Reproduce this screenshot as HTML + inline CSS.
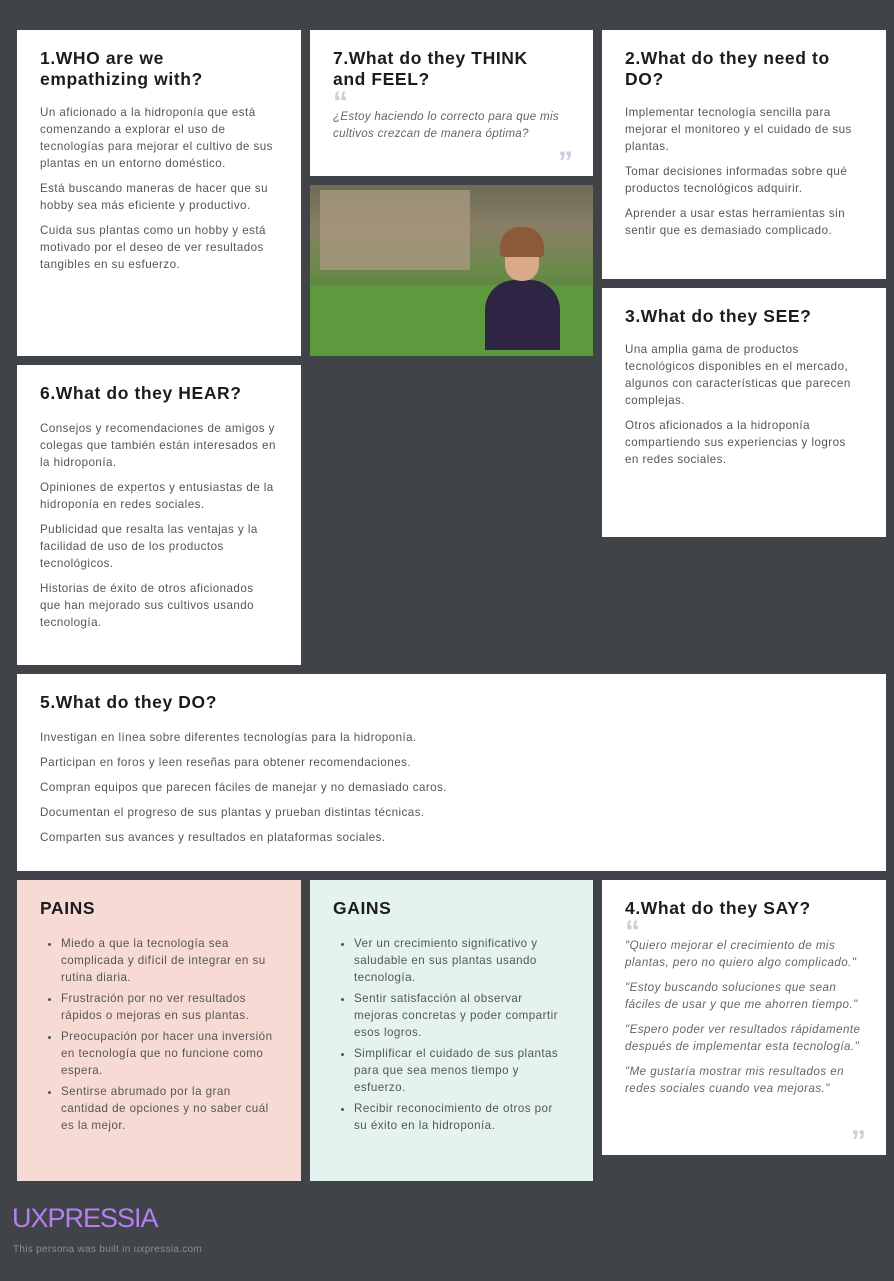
<!DOCTYPE html><html><head><meta charset="utf-8"><style>
body{margin:0;width:894px;height:1281px;background:#404449;font-family:"Liberation Sans",sans-serif;position:relative;overflow:hidden}
.c{position:absolute;background:#fff;box-sizing:border-box;padding:18px 24px 0 23px}
h2{margin:0 0 14px;font-size:17.5px;line-height:21px;font-weight:bold;color:#1c1c1c;letter-spacing:.6px;max-width:225px}
p{margin:0 0 8px;font-size:11.6px;line-height:17px;color:#555;letter-spacing:.45px}
.i{font-style:italic;color:#666;letter-spacing:.45px}
ul{margin:0;padding-left:21px}
li{font-size:11.6px;line-height:17px;color:#555;margin-bottom:4px;letter-spacing:.45px}
.q{font-size:30px;color:#ccd;font-family:"Liberation Sans",sans-serif;line-height:18px;height:14px;font-weight:bold}
.qr{position:absolute;right:20px;bottom:-4px;font-size:30px;color:#ccd;font-family:"Liberation Sans",sans-serif;font-weight:bold}
</style></head><body>
<div class="c" style="left:17px;top:30px;width:284px;height:326px"><h2>1.WHO are we empathizing with?</h2>
<p>Un aficionado a la hidroponía que está comenzando a explorar el uso de tecnologías para mejorar el cultivo de sus plantas en un entorno doméstico.</p>
<p>Está buscando maneras de hacer que su hobby sea más eficiente y productivo.</p>
<p>Cuida sus plantas como un hobby y está motivado por el deseo de ver resultados tangibles en su esfuerzo.</p></div>
<div class="c" style="left:310px;top:30px;width:283px;height:146px"><h2 style="margin-bottom:4px">7.What do they THINK and FEEL?</h2><div class="q">“</div>
<p class="i" style="letter-spacing:.3px">¿Estoy haciendo lo correcto para que mis cultivos crezcan de manera óptima?</p><div class="qr">”</div></div>
<div style="position:absolute;left:310px;top:185px;width:283px;height:171px;overflow:hidden;background:linear-gradient(180deg,#6d6a55 0%,#8a7f66 25%,#6a8a4a 50%,#4f7f35 75%,#5e8a3c 100%)">
<div style="position:absolute;left:10px;top:5px;width:150px;height:80px;background:#a89880;opacity:.8"></div>
<div style="position:absolute;left:0;top:100px;width:283px;height:71px;background:#5d9a3e"></div>
<div style="position:absolute;left:175px;top:95px;width:75px;height:70px;background:#2e2545;border-radius:30px 30px 0 0"></div>
<div style="position:absolute;left:195px;top:48px;width:34px;height:48px;background:#d9a98a;border-radius:16px"></div>
<div style="position:absolute;left:190px;top:42px;width:44px;height:30px;background:#8a5a3a;border-radius:20px 20px 4px 4px"></div></div>
<div class="c" style="left:602px;top:30px;width:284px;height:249px"><h2>2.What do they need to DO?</h2>
<p>Implementar tecnología sencilla para mejorar el monitoreo y el cuidado de sus plantas.</p>
<p>Tomar decisiones informadas sobre qué productos tecnológicos adquirir.</p>
<p>Aprender a usar estas herramientas sin sentir que es demasiado complicado.</p></div>
<div class="c" style="left:602px;top:288px;width:284px;height:249px"><h2>3.What do they SEE?</h2>
<p>Una amplia gama de productos tecnológicos disponibles en el mercado, algunos con características que parecen complejas.</p>
<p>Otros aficionados a la hidroponía compartiendo sus experiencias y logros en redes sociales.</p></div>
<div class="c" style="left:17px;top:365px;width:284px;height:300px"><h2 style="margin-bottom:16px">6.What do they HEAR?</h2>
<p>Consejos y recomendaciones de amigos y colegas que también están interesados en la hidroponía.</p>
<p>Opiniones de expertos y entusiastas de la hidroponía en redes sociales.</p>
<p>Publicidad que resalta las ventajas y la facilidad de uso de los productos tecnológicos.</p>
<p>Historias de éxito de otros aficionados que han mejorado sus cultivos usando tecnología.</p></div>
<div class="c" style="left:17px;top:674px;width:869px;height:197px"><h2 style="margin-bottom:16px">5.What do they DO?</h2>
<p>Investigan en línea sobre diferentes tecnologías para la hidroponía.</p>
<p>Participan en foros y leen reseñas para obtener recomendaciones.</p>
<p>Compran equipos que parecen fáciles de manejar y no demasiado caros.</p>
<p>Documentan el progreso de sus plantas y prueban distintas técnicas.</p>
<p>Comparten sus avances y resultados en plataformas sociales.</p></div>
<div class="c" style="left:17px;top:880px;width:284px;height:301px;background:#f8dad4"><h2 style="margin-bottom:16px">PAINS</h2><ul>
<li>Miedo a que la tecnología sea complicada y difícil de integrar en su rutina diaria.</li>
<li>Frustración por no ver resultados rápidos o mejoras en sus plantas.</li>
<li>Preocupación por hacer una inversión en tecnología que no funcione como espera.</li>
<li>Sentirse abrumado por la gran cantidad de opciones y no saber cuál es la mejor.</li></ul></div>
<div class="c" style="left:310px;top:880px;width:283px;height:301px;background:#e4f3ee"><h2 style="margin-bottom:16px">GAINS</h2><ul>
<li>Ver un crecimiento significativo y saludable en sus plantas usando tecnología.</li>
<li>Sentir satisfacción al observar mejoras concretas y poder compartir esos logros.</li>
<li>Simplificar el cuidado de sus plantas para que sea menos tiempo y esfuerzo.</li>
<li>Recibir reconocimiento de otros por su éxito en la hidroponía.</li></ul></div>
<div class="c" style="left:602px;top:880px;width:284px;height:275px"><h2 style="margin-bottom:4px">4.What do they SAY?</h2><div class="q">“</div>
<p class="i">"Quiero mejorar el crecimiento de mis plantas, pero no quiero algo complicado."</p>
<p class="i">"Estoy buscando soluciones que sean fáciles de usar y que me ahorren tiempo."</p>
<p class="i">"Espero poder ver resultados rápidamente después de implementar esta tecnología."</p>
<p class="i">"Me gustaría mostrar mis resultados en redes sociales cuando vea mejoras."</p><div class="qr">”</div></div>
<div style="position:absolute;left:12px;top:1203px;font-size:27px;color:#b77ef0;letter-spacing:-1px">UXPRESSIA</div>
<div style="position:absolute;left:13px;top:1244px;font-size:10px;color:#8a8d92;letter-spacing:.3px">This persona was built in uxpressia.com</div>
</body></html>
